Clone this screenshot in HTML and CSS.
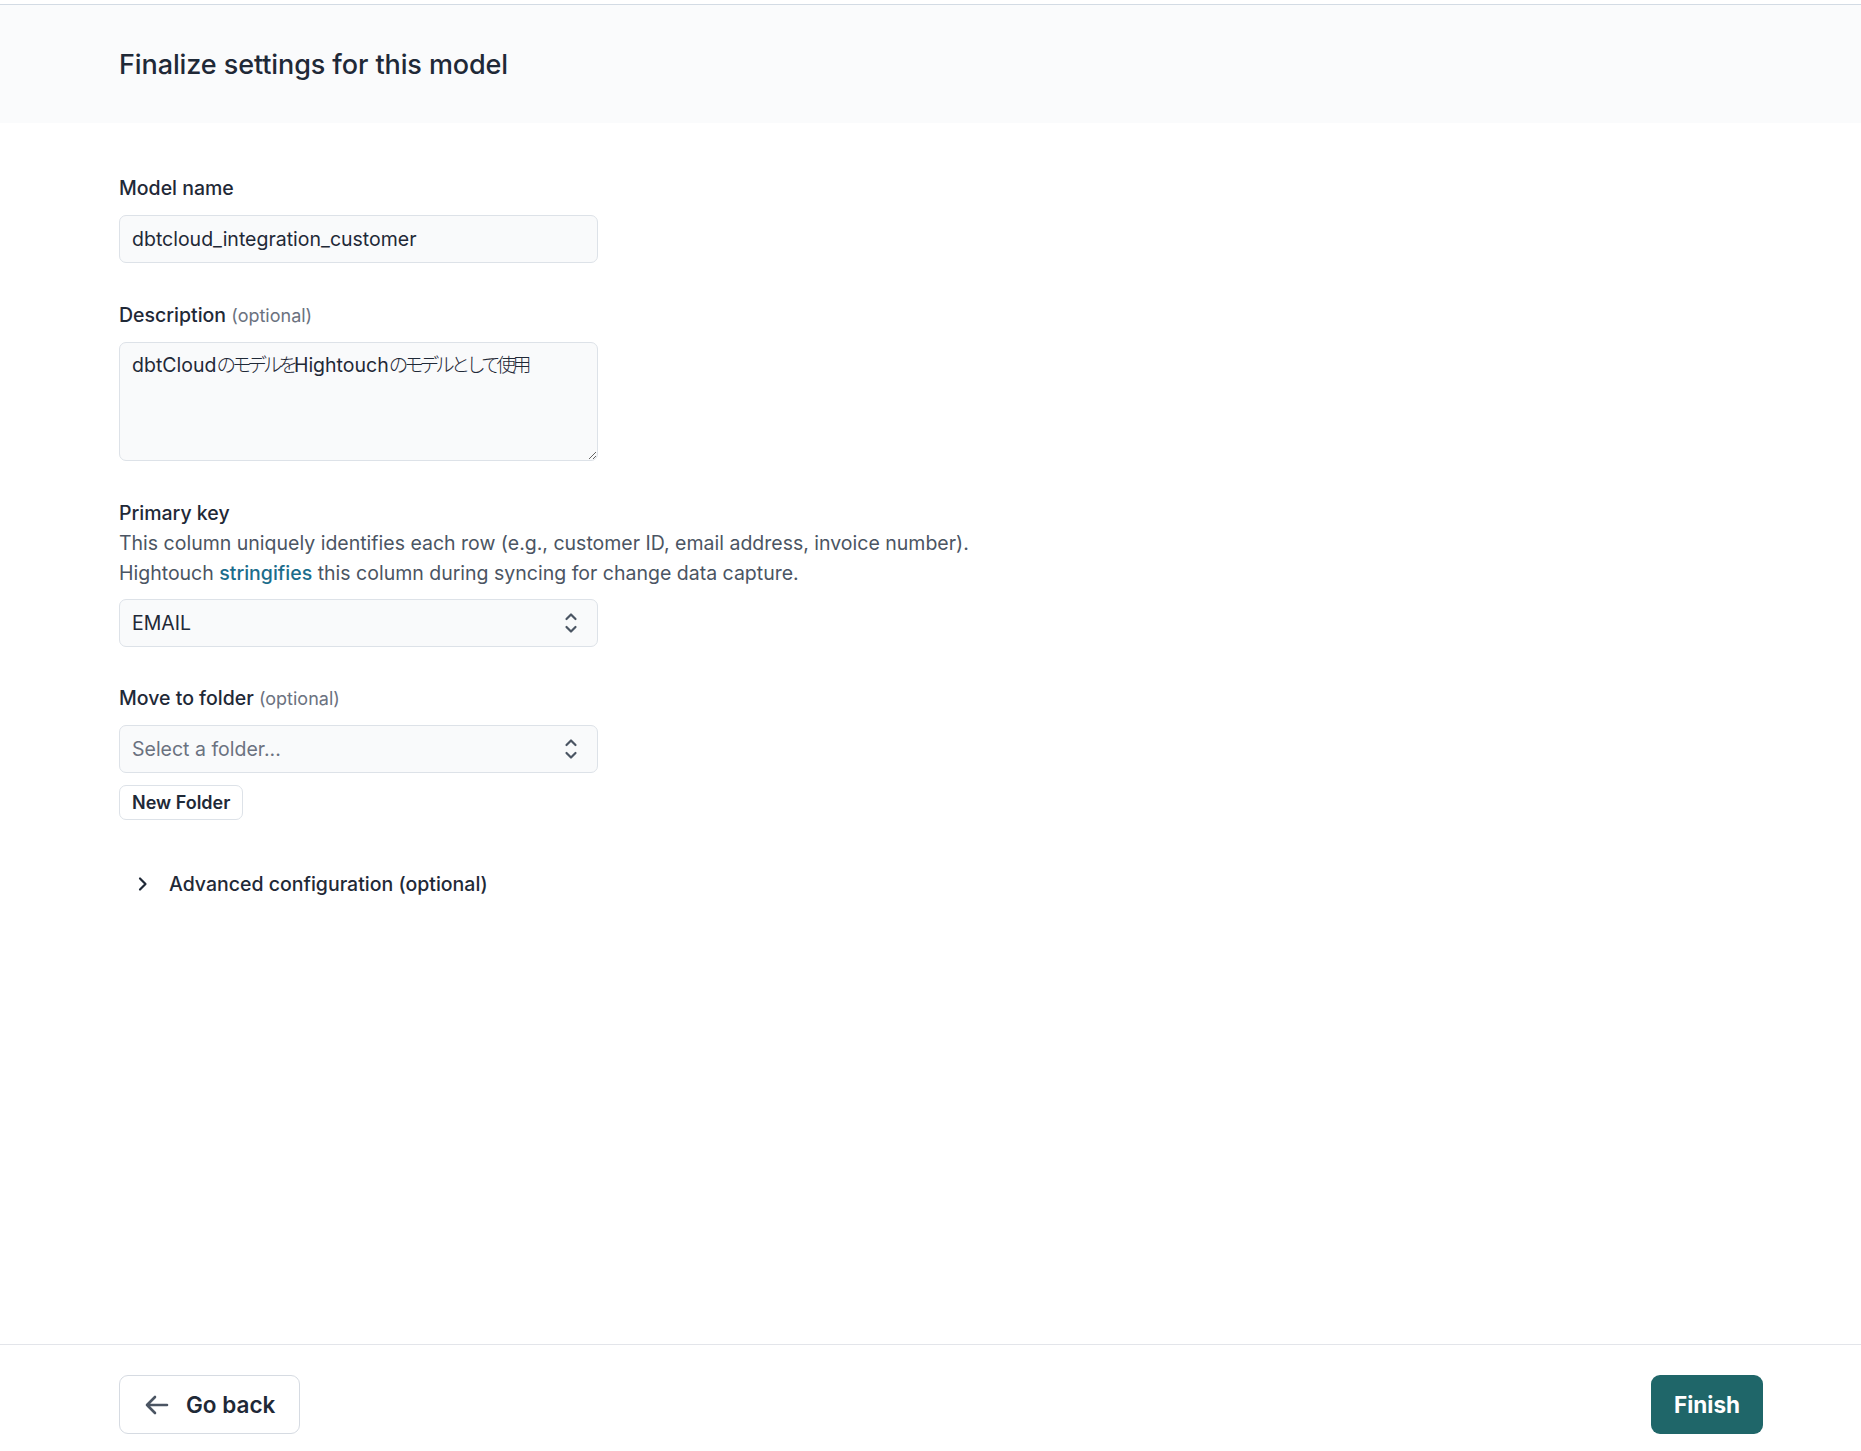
FILE: index.html
```html
<!DOCTYPE html>
<html lang="en">
<head>
<meta charset="utf-8">
<title>Finalize settings for this model</title>
<link rel="stylesheet" href="styles.css">
</head>
<body>
<div class="page">
  <header class="header">
    <h1 class="title">Finalize settings for this model</h1>
  </header>
  <main class="main">
    <div class="field">
      <label class="label">Model name</label>
      <div class="control input">dbtcloud_integration_customer</div>
    </div>
    <div class="field field-desc">
      <label class="label">Description <span class="optional">(optional)</span></label>
      <div class="control textarea">dbtCloud<span class="jp">のモデルを</span>Hightouch<span class="jp">のモデルとして使用</span></div>
    </div>
    <div class="field">
      <label class="label">Primary key</label>
      <p class="help">This column uniquely identifies each row (e.g., customer ID, email address, invoice number).<br>Hightouch <a class="link" href="#">stringifies</a> this column during syncing for change data capture.</p>
      <div class="control select">
        <span>EMAIL</span>
        <svg class="updown" width="14" height="22" viewBox="0 0 14 22"><path d="M2.5 7 L7 2.5 L11.5 7 M2.5 15 L7 19.5 L11.5 15" fill="none" stroke="#4b5563" stroke-width="2.2" stroke-linecap="round" stroke-linejoin="round"/></svg>
      </div>
    </div>
    <div class="field field-folder">
      <label class="label">Move to folder <span class="optional">(optional)</span></label>
      <div class="control select placeholder">
        <span>Select a folder...</span>
        <svg class="updown" width="14" height="22" viewBox="0 0 14 22"><path d="M2.5 7 L7 2.5 L11.5 7 M2.5 15 L7 19.5 L11.5 15" fill="none" stroke="#4b5563" stroke-width="2.2" stroke-linecap="round" stroke-linejoin="round"/></svg>
      </div>
      <button class="small-btn">New Folder</button>
    </div>
    <div class="advanced">
      <svg width="12" height="16" viewBox="0 0 12 16"><path d="M3 2.5 L8.5 8 L3 13.5" fill="none" stroke="#1f2937" stroke-width="2.2" stroke-linecap="round" stroke-linejoin="round"/></svg>
      <span>Advanced configuration (optional)</span>
    </div>
  </main>
  <footer class="footer">
    <button class="btn btn-back">
      <svg width="26" height="22" viewBox="0 0 26 22"><path d="M23 11 H3 M11 3 L3 11 L11 19" fill="none" stroke="#4b5563" stroke-width="2.6" stroke-linecap="round" stroke-linejoin="round"/></svg>
      <span>Go back</span>
    </button>
    <button class="btn btn-finish">Finish</button>
  </footer>
</div>
</body>
</html>
```

FILE: styles.css
```css
* { box-sizing: border-box; }
html, body { margin: 0; padding: 0; background: #ffffff; }
body {
  font-family: Inter, "Noto Sans CJK JP", sans-serif;
  color: #1f2937;
}
.page {
  min-height: 1451px;
  display: flex;
  flex-direction: column;
  padding-top: 4px;
}
.header {
  background: #fafbfc;
  border-top: 1px solid #d3dbe4;
  height: 119px;
  display: flex;
  align-items: center;
  padding-left: 119px;
}
.title {
  margin: 0;
  font-size: 27px;
  font-weight: 500;
  color: #1f2937;
  letter-spacing: -0.1px;
}
.main {
  flex: 1;
  padding: 53px 119px 0;
  display: flex;
  flex-direction: column;
  gap: 40px;
}
.field {
  display: flex;
  flex-direction: column;
  align-items: flex-start;
}
.label {
  font-size: 19.5px;
  line-height: 24px;
  font-weight: 500;
  color: #1f2937;
  margin-bottom: 15px;
}
.field-desc .label { margin-bottom: 14px; }
.field-folder { margin-top: -1px; }
.field-folder .label { margin-bottom: 14px; }
.optional {
  font-size: 18px;
  font-weight: 400;
  color: #6b7280;
}
.help {
  margin: -12px 0 11px;
  font-size: 19.5px;
  line-height: 30px;
  color: #4b5563;
}
.link {
  color: #1b6d8c;
  font-weight: 500;
  text-decoration: none;
}
.control {
  width: 479px;
  background: #f9fafb;
  border: 1px solid #dde2e8;
  border-radius: 7px;
  font-family: Inter, "Noto Sans CJK JP", sans-serif;
  font-size: 19.5px;
  color: #1f2937;
}
.input {
  height: 48px;
  display: flex;
  align-items: center;
  padding: 0 12px;
}
.textarea {
  height: 119px;
  padding: 10px 12px;
  resize: vertical;
  overflow: auto;
  line-height: 24px;
}
.jp {
  letter-spacing: -4px;
  font-weight: 300;
}
.select {
  height: 48px;
  display: flex;
  align-items: center;
  justify-content: space-between;
  padding: 0 19px 0 12px;
}
.placeholder span { color: #6b7280; }
.small-btn {
  margin-top: 12px;
  height: 35px;
  padding: 0 12px;
  background: #ffffff;
  border: 1px solid #dde2e8;
  border-radius: 7px;
  font-family: Inter, sans-serif;
  font-size: 18px;
  font-weight: 600;
  color: #1f2937;
}
.advanced {
  margin-top: 9px;
  display: flex;
  align-items: center;
  gap: 20px;
  padding-left: 18px;
  font-size: 19.5px;
  font-weight: 500;
  color: #1f2937;
  height: 30px;
}
.footer {
  border-top: 1px solid #e3e5ea;
  padding: 30px 98px 17px 119px;
  display: flex;
  justify-content: space-between;
  align-items: center;
}
.btn {
  height: 59px;
  border-radius: 9px;
  font-family: Inter, sans-serif;
  font-size: 22.5px;
  font-weight: 600;
  display: flex;
  align-items: center;
}
.btn-back {
  background: #ffffff;
  border: 1px solid #d6dbe2;
  color: #1f2937;
  padding: 0 24px;
  gap: 16px;
}
.btn-finish {
  background: #1f6669;
  border: none;
  color: #ffffff;
  padding: 0 23px;
  font-weight: 700;
}
```
